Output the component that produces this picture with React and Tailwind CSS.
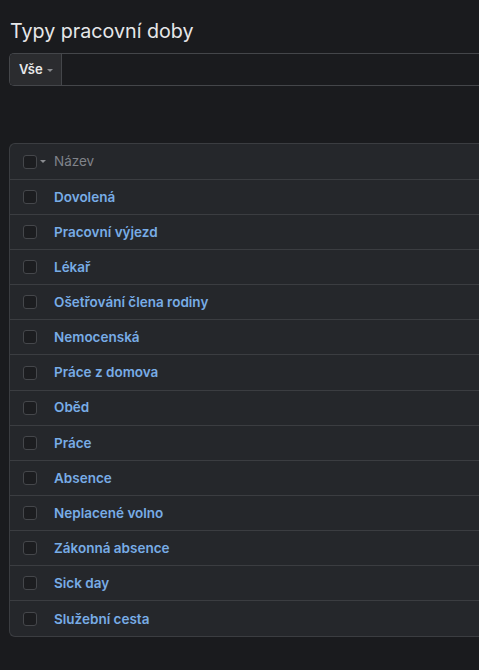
const ROWS = [
  'Dovolená',
  'Pracovní výjezd',
  'Lékař',
  'Ošetřování člena rodiny',
  'Nemocenská',
  'Práce z domova',
  'Oběd',
  'Práce',
  'Absence',
  'Neplacené volno',
  'Zákonná absence',
  'Sick day',
  'Služební cesta',
]

function Checkbox() {
  return <span className="block w-[14px] h-[14px] rounded-[3px] border border-[#45474b] bg-[#1c1d20]" />
}

export default function App() {
  return (
    <div className="min-h-screen bg-[#1a1b1e] text-[#e4e5e7] overflow-hidden" style={{ fontFamily: 'Inter, Roboto, "Noto Sans", sans-serif' }}>
      <div className="pl-[9px] pt-[17px]">
        <h1 className="text-[19.7px] leading-[28px] font-normal text-[#e6e7e9] pl-[1px]">Typy pracovní doby</h1>

        {/* filter bar */}
        <div className="mt-[8px] flex h-[33px] border border-r-0 border-[#44464a] rounded-l-[5px] overflow-hidden">
          <button className="flex items-center gap-[4px] pl-[9px] pr-[8px] bg-[#2b2c2f] border-r border-[#44464a] text-[13px] font-semibold text-[#e8e9eb]">
            Vše
            <span className="w-0 h-0 border-l-[3px] border-r-[3px] border-t-[3px] border-l-transparent border-r-transparent border-t-[#8a8c90] mt-[1px]" />
          </button>
          <div className="flex-1 bg-[#1a1b1e]" />
        </div>

        {/* table */}
        <div className="mt-[57px] border border-r-0 border-[#3b3d41] rounded-l-[6px] bg-[#25272b] overflow-hidden">
          <div className="flex items-center h-[36px] border-b border-[#3b3d41]">
            <div className="flex items-center pl-[13px] w-[44px] gap-[3px]">
              <Checkbox />
              <span className="w-0 h-0 border-l-[3px] border-r-[3px] border-t-[3px] border-l-transparent border-r-transparent border-t-[#8a8c90]" />
            </div>
            <span className="text-[13.5px] text-[#80838a]">Název</span>
          </div>
          {ROWS.map((name, i) => (
            <div key={name} className={`flex items-center h-[35.1px] ${i < ROWS.length - 1 ? 'border-b border-[#3b3d41]' : ''}`}>
              <div className="pl-[13px] w-[44px]">
                <Checkbox />
              </div>
              <a className="text-[13.5px] font-semibold text-[#78ace6]">{name}</a>
            </div>
          ))}
        </div>
      </div>
    </div>
  )
}
